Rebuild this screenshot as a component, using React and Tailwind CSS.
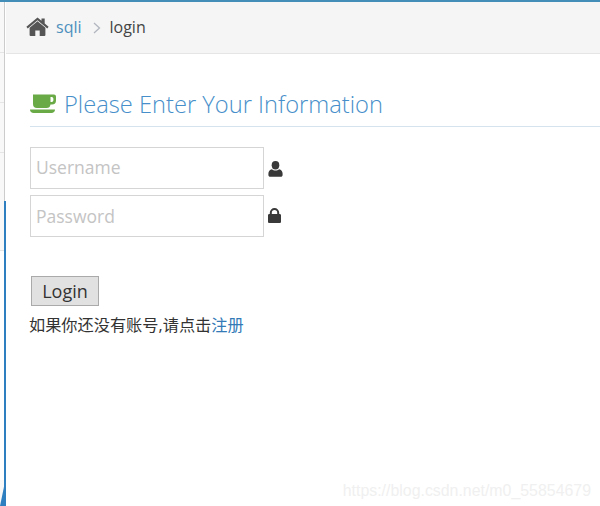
import React from 'react';

const HomeIcon = () => (
  <svg width="23" height="20" viewBox="0 0 23 20" className="shrink-0">
    <path fill="#555555" d="M11.5 4.2 3.6 10.8V18a1 1 0 0 0 1 1h4.7v-5.6h4.4V19h4.7a1 1 0 0 0 1-1v-7.2z" />
    <path fill="#555555" d="M11.5 0.6 0.4 9.8l1.3 1.6 9.8-8.2 9.8 8.2 1.3-1.6-3.9-3.3V1.4h-3.2v2.4z" />
  </svg>
);

const CoffeeIcon = () => (
  <svg width="26" height="20" viewBox="0 0 26 20" className="shrink-0">
    <path fill="#69aa46" fillRule="evenodd" d="M3 0.5h21a2 2 0 0 1 2 2v4a4 4 0 0 1-4 4h-1.500a4 4 0 0 1-4 3.500H7a4 4 0 0 1-4-4zM20.500 3v5h1.200a1.700 1.700 0 0 0 1.700-1.700V4.700A1.700 1.700 0 0 0 21.700 3z" />
    <path fill="#69aa46" d="M0 15.500h25c0 2.200-1.500 3.500-3.500 3.500h-18C1.500 19 0 17.700 0 15.500z" />
  </svg>
);

const UserIcon = () => (
  <svg width="15" height="16" viewBox="0 0 15 16" className="ml-[4px] mt-[1px] shrink-0">
    <ellipse cx="7.500" cy="4.300" rx="3.800" ry="4.200" fill="#393939" />
    <path fill="#393939" d="M3.800 8.200c1 .9 2.300 1.400 3.700 1.400s2.700-.5 3.700-1.400c2 .4 3.400 2 3.400 4.300v1.400c0 1-.8 1.800-1.800 1.800H2.200c-1 0-1.800-.8-1.800-1.800v-1.400c0-2.300 1.400-3.900 3.400-4.300z" />
  </svg>
);

const LockIcon = () => (
  <svg width="13" height="15" viewBox="0 0 13 15" className="mb-[1px] ml-[4px] shrink-0">
    <path fill="#393939" fillRule="evenodd" d="M1.800 6V4.700a4.700 4.700 0 0 1 9.400 0V6h.5c.7 0 1.300.6 1.300 1.300v6.400c0 .7-.6 1.300-1.300 1.300H1.300C.6 15 0 14.400 0 13.700V7.300C0 6.600.6 6 1.300 6zm2 0h5.400V4.700a2.700 2.700 0 0 0-5.400 0z" />
  </svg>
);

export default function App() {
  return (
    <div className="relative flex h-[506px] w-[600px] overflow-hidden bg-white font-['Open_Sans',sans-serif]">
      {/* collapsed sidebar strip */}
      <div className="relative flex h-full w-[6px] shrink-0 flex-col">
        <div className="h-[201px] w-[5px] shrink-0 border-r border-[#cccccc] bg-[#f8f8f8]">
          <div className="h-[53px] border-b border-[#e5e5e5]" />
          <div className="h-[50px] border-b border-[#e5e5e5]" />
          <div className="h-[50px] border-b border-[#e5e5e5]" />
        </div>
        <div className="w-[6px] flex-1 border-r-2 border-[#2e7fc0] bg-[#f8f8f8]">
          <div className="h-[50px] border-b border-[#e5e5e5]" />
          <div className="h-[229px] bg-white" />
        </div>
        <div className="absolute bottom-0 left-0 h-[24px] w-[5px] bg-[#2e7fc0] [clip-path:polygon(0_100%,100%_0,100%_100%)]" />
      </div>

      <div className="flex min-w-0 flex-1 flex-col">
        <div className="absolute left-0 top-0 h-[2px] w-full bg-[#438eb9]" />
        {/* breadcrumb */}
        <div className="flex h-[54px] items-center border-b border-[#e5e5e5] bg-[#f5f5f5] pl-[20px] text-[16px]">
          <HomeIcon />
          <span className="ml-[7px] text-[#4c8fbd]">sqli</span>
          <svg width="8" height="12" viewBox="0 0 8 12" className="ml-[11px] mt-[3px]">
            <path d="M1 1l5.500 5-5.500 5" fill="none" stroke="#b2b6bf" strokeWidth="1.300" />
          </svg>
          <span className="ml-[9px] text-[#444444]">login</span>
        </div>

        <div className="flex flex-col pl-[24px]">
          {/* page heading */}
          <div className="mt-[32px] flex h-[41px] items-center border-b border-[#d5e3ef] pb-[4px]">
            <CoffeeIcon />
            <h1 className="ml-[8px] mt-[2px] text-[23.700px] font-light leading-none text-[#478fca]">Please Enter Your Information</h1>
          </div>

          <form className="mt-[20px] flex flex-col">
            <div className="flex items-center">
              <input
                placeholder="Username"
                className="h-[42px] w-[234px] border border-[#d5d5d5] bg-white px-[5px] pb-[2px] text-[17.500px] outline-none placeholder:text-[#c4c4c4]"
              />
              <UserIcon />
            </div>
            <div className="mt-[6px] flex items-center">
              <input
                type="text"
                placeholder="Password"
                className="h-[42px] w-[234px] border border-[#d5d5d5] bg-white px-[5px] text-[17.500px] outline-none placeholder:text-[#c4c4c4]"
              />
              <LockIcon />
            </div>
            <button
              type="button"
              className="ml-[1px] mt-[39px] h-[30px] w-[68px] border border-[#aaaaaa] bg-[#e1e1e1] text-[18px] leading-none text-[#333333]"
            >
              Login
            </button>
          </form>

          <p className="-ml-[1px] mt-[8px] font-['Open_Sans','Noto_Sans_CJK_SC',sans-serif] text-[16.200px] leading-[22px] text-[#333333]">
            如果你还没有账号,请点击<a href="#" className="text-[#337ab7]">注册</a>
          </p>
        </div>
      </div>

      {/* watermark */}
      <div className="absolute bottom-[7px] right-[9px] font-['Liberation_Sans',sans-serif] text-[15.900px] leading-none text-[#f0f0f0]">
        https://blog.csdn.net/m0_55854679
      </div>
    </div>
  );
}
